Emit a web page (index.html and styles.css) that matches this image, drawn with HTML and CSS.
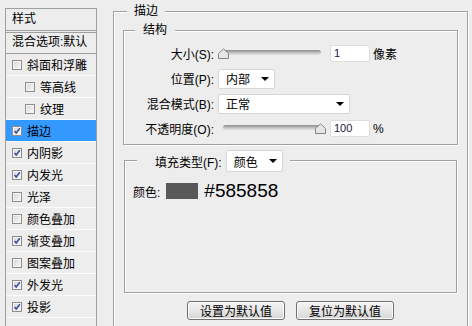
FILE: index.html
```html
<!DOCTYPE html>
<html lang="zh-CN">
<head>
    <meta charset="UTF-8">
    <title>图层样式 - 描边</title>
    <link rel="stylesheet" href="styles.css">
</head>
<body>
    <div class="dialog">
        <!-- 左侧样式列表 -->
        <div class="style-list">
            <div class="list-head">样式</div>
            <div class="list-blend">混合选项:默认</div>
            <div class="list-item"><span class="check"></span>斜面和浮雕</div>
            <div class="list-item sub"><span class="check"></span>等高线</div>
            <div class="list-item sub"><span class="check"></span>纹理</div>
            <div class="list-item active"><span class="check"><svg viewBox="0 0 8 8"><polyline points="1.5,4 3.2,6 6.8,1.2"/></svg></span>描边</div>
            <div class="list-item"><span class="check"><svg viewBox="0 0 8 8"><polyline points="1.5,4 3.2,6 6.8,1.2"/></svg></span>内阴影</div>
            <div class="list-item"><span class="check"><svg viewBox="0 0 8 8"><polyline points="1.5,4 3.2,6 6.8,1.2"/></svg></span>内发光</div>
            <div class="list-item"><span class="check"></span>光泽</div>
            <div class="list-item"><span class="check"></span>颜色叠加</div>
            <div class="list-item"><span class="check"><svg viewBox="0 0 8 8"><polyline points="1.5,4 3.2,6 6.8,1.2"/></svg></span>渐变叠加</div>
            <div class="list-item"><span class="check"></span>图案叠加</div>
            <div class="list-item"><span class="check"><svg viewBox="0 0 8 8"><polyline points="1.5,4 3.2,6 6.8,1.2"/></svg></span>外发光</div>
            <div class="list-item"><span class="check"><svg viewBox="0 0 8 8"><polyline points="1.5,4 3.2,6 6.8,1.2"/></svg></span>投影</div>
            <div class="list-item"></div>
        </div>

        <!-- 右侧描边设置 -->
        <div class="options">
            <div class="group outer">
                <span class="group-title">描边</span>

                <div class="group structure">
                    <span class="group-title">结构</span>
                    <div class="form-grid">
                        <label>大小(S):</label>
                        <div class="control">
                            <div class="slider">
                                <div class="track"></div>
                                <svg class="thumb" viewBox="0 0 11 11"><path d="M0.5 10.5 V5.5 L5.5 0.8 L10.5 5.5 V10.5 Z"/></svg>
                            </div>
                            <div class="field">1</div>
                            <span class="unit">像素</span>
                        </div>

                        <label>位置(P):</label>
                        <div class="control">
                            <div class="select short"><span>内部</span><i class="arrow"></i></div>
                        </div>

                        <label>混合模式(B):</label>
                        <div class="control">
                            <div class="select wide"><span>正常</span><i class="arrow"></i></div>
                        </div>

                        <label>不透明度(O):</label>
                        <div class="control">
                            <div class="slider">
                                <div class="track"></div>
                                <svg class="thumb right" viewBox="0 0 11 11"><path d="M0.5 10.5 V5.5 L5.5 0.8 L10.5 5.5 V10.5 Z"/></svg>
                            </div>
                            <div class="field">100</div>
                            <span class="unit">%</span>
                        </div>
                    </div>
                </div>

                <div class="group fill">
                    <div class="fill-legend">
                        <span>填充类型(F):</span>
                        <div class="select short tall"><span>颜色</span><i class="arrow"></i></div>
                    </div>
                    <div class="color-row">
                        <span>颜色:</span>
                        <span class="swatch"></span>
                        <span class="hex">#585858</span>
                    </div>
                </div>

                <div class="buttons">
                    <button>设置为默认值</button>
                    <button>复位为默认值</button>
                </div>
            </div>
        </div>
    </div>
</body>
</html>
```

FILE: styles.css
```css
* {
    margin: 0;
    padding: 0;
    box-sizing: border-box;
}

body {
    background: #ededed;
    width: 472px;
    height: 326px;
    overflow: hidden;
    font-family: 'Liberation Sans', 'Noto Sans CJK SC', sans-serif;
    font-size: 12px;
    color: #000;
}

.dialog {
    display: flex;
    align-items: flex-start;
}

/* 左侧列表 */
.style-list {
    margin: 8px 0 0 5px;
    width: 92px;
    height: 330px;
    border: 1px solid #a0a0a0;
    border-bottom: none;
}

.list-head {
    height: 24px;
    line-height: 20px;
    padding-left: 6px;
    border-bottom: 3px double #a0a0a0;
}

.list-blend {
    height: 21px;
    line-height: 19px;
    padding-left: 6px;
    border-bottom: 1px solid #a0a0a0;
    white-space: nowrap;
}

.list-item {
    display: flex;
    align-items: center;
    height: 22px;
    padding-left: 6px;
    border-bottom: 1px solid #fbfbfb;
}

.list-item.sub {
    padding-left: 19px;
}

.list-item.active {
    background: #3399ff;
}

.check {
    width: 10px;
    height: 10px;
    margin-right: 5px;
    border: 1px solid #8e8e8e;
    background: linear-gradient(135deg, #d6d6d6, #fafafa);
    box-shadow: inset 0 0 0 1px #f4f4f4;
    display: flex;
}

.check svg {
    width: 8px;
    height: 8px;
    fill: none;
    stroke: #3a4c9c;
    stroke-width: 1.5;
}

/* 右侧 */
.options {
    margin: 11px 0 0 16px;
    width: 355px;
}

.group {
    position: relative;
    border: 1px solid #a0a0a0;
    box-shadow: 1px 1px 0 #fff, inset 1px 1px 0 #fff;
}

.group-title {
    position: absolute;
    top: -8px;
    left: 13px;
    line-height: 14px;
    padding: 0 7px;
    background: #ededed;
}

.outer {
    height: 330px;
    border-bottom: none;
    padding: 18px 9px 0;
}

.structure {
    height: 115px;
    padding: 10px 0 0;
}

.structure .group-title {
    left: 11px;
    padding: 0 8px;
}

.form-grid {
    display: grid;
    grid-template-columns: 90px 1fr;
    grid-auto-rows: 25px;
    column-gap: 4px;
    align-items: center;
}

.form-grid label {
    text-align: right;
    white-space: nowrap;
}

.control {
    display: flex;
    align-items: center;
}

.slider {
    position: relative;
    width: 108px;
    height: 11px;
}

.track {
    margin: 2px 5px 0;
    height: 5px;
    border-radius: 3px;
    background: linear-gradient(#8c8c8c, #cfcfcf 70%, #e2e2e2);
}

.thumb {
    position: absolute;
    top: 0;
    left: 0;
    width: 11px;
    height: 11px;
}

.thumb.right {
    left: auto;
    right: 0;
}

.thumb path {
    fill: #e6e6e6;
    stroke: #858585;
    stroke-width: 1;
}

.field {
    width: 40px;
    height: 17px;
    margin-left: 4px;
    padding-left: 3px;
    line-height: 15px;
    font-size: 11px;
    background: #fff;
    border: 1px solid #dedede;
    border-radius: 2px;
    color: #1a1a3a;
}

.unit {
    margin-left: 3px;
}

.select {
    display: flex;
    align-items: center;
    justify-content: space-between;
    height: 20px;
    padding: 0 3px 0 7px;
    background: #fff;
    border: 1px solid #d6d6d6;
    border-radius: 2px;
}

.select.short {
    width: 57px;
}

.select.wide {
    width: 132px;
}

.select.tall {
    height: 22px;
}

.arrow {
    width: 0;
    height: 0;
    border-left: 4px solid transparent;
    border-right: 4px solid transparent;
    border-top: 4px solid #000;
    margin-right: 2px;
}

.fill {
    height: 133px;
    margin: 15px 1px 0;
    padding: 22px 0 0 8px;
}

.fill-legend {
    position: absolute;
    top: -11px;
    left: 12px;
    display: flex;
    align-items: center;
    gap: 4px;
    padding: 0 7px 0 18px;
    background: #ededed;
}

.color-row {
    display: flex;
    align-items: center;
    height: 16px;
}

.swatch {
    width: 32px;
    height: 16px;
    margin-left: 6px;
    background: #585858;
}

.hex {
    margin-left: 6px;
    font-size: 19px;
    line-height: 16px;
}

.buttons {
    display: flex;
    justify-content: center;
    gap: 11px;
    margin-top: 8px;
}

button {
    width: 98px;
    height: 19px;
    font-family: inherit;
    font-size: 12px;
    color: #000;
    border: 1px solid #707070;
    border-radius: 3px;
    background: linear-gradient(#f4f4f4, #e6e6e6 50%, #d6d6d6);
    box-shadow: inset 0 0 0 1px #fafafa;
}
```
